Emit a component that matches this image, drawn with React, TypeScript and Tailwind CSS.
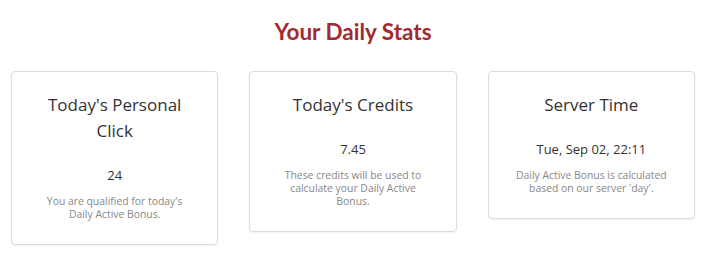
const stats = [
  {
    title: "Today's Personal Click",
    value: "24",
    note: "You are qualified for today's Daily Active Bonus.",
  },
  {
    title: "Today's Credits",
    value: "7.45",
    note: "These credits will be used to calculate your Daily Active Bonus.",
  },
  {
    title: "Server Time",
    value: "Tue, Sep 02, 22:11",
    note: "Daily Active Bonus is calculated based on our server 'day'.",
  },
];

export default function App() {
  return (
    <div className="bg-white w-[706px] h-[265px] font-['Open_Sans',sans-serif]">
      <h1 className="pt-[17px] text-center font-['Lato',sans-serif] font-bold text-[22.5px] leading-[30px] text-[#a22a30]">
        Your Daily Stats
      </h1>
      <div className="mt-[24px] px-[11px] grid grid-cols-3 gap-[31px] items-start">
        {stats.map((s) => (
          <div
            key={s.title}
            className="border border-[#dcdcdc] rounded-[4px] shadow-[0_1px_2px_rgba(0,0,0,0.06)] px-[26px] pt-[20px] pb-[23px] text-center"
          >
            <h2 className="text-[17px] leading-[26px] text-[#333]">{s.title}</h2>
            <div className="mt-[21px] text-[13px] leading-[20px] text-[#333]">{s.value}</div>
            <p className="mt-[10px] text-[10.4px] leading-[13px] text-[#888]">{s.note}</p>
          </div>
        ))}
      </div>
    </div>
  );
}
